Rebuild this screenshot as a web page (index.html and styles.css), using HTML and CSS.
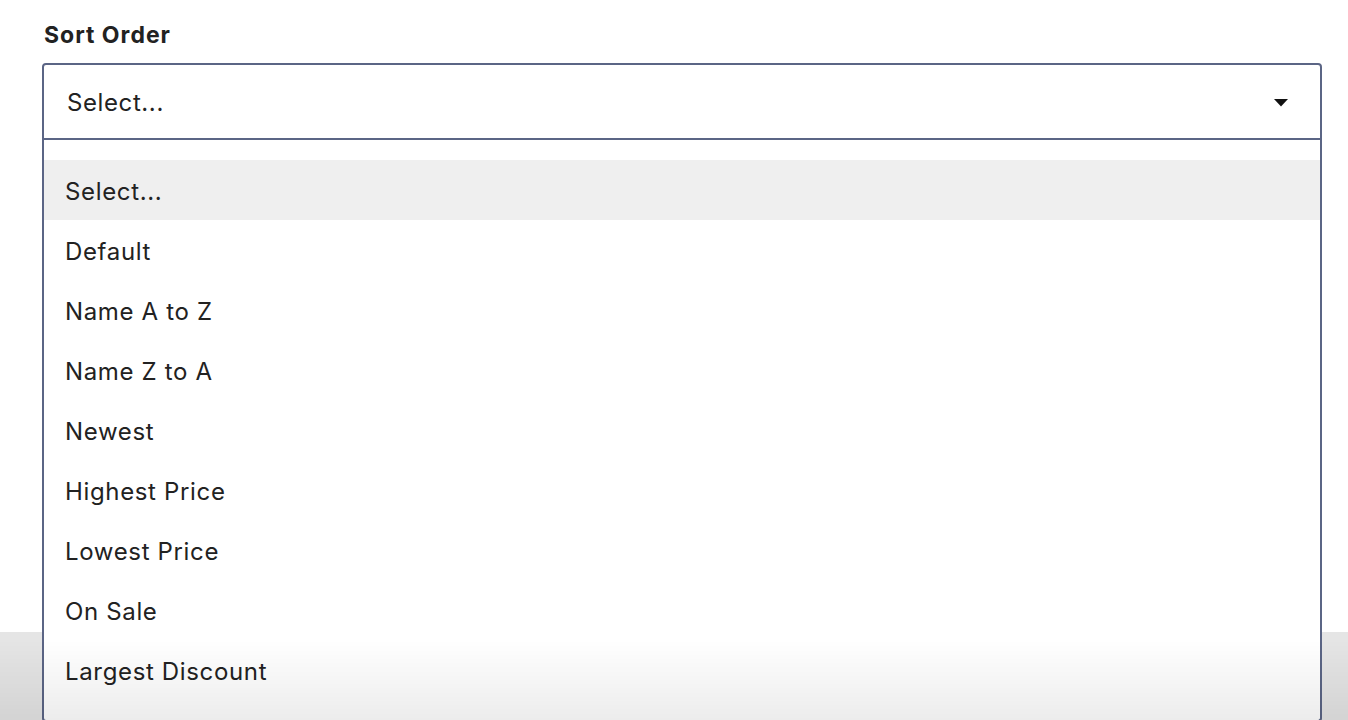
FILE: index.html
```html
<!DOCTYPE html>
<html lang="en">
<head>
<meta charset="utf-8">
<title>Sort Order</title>
<link rel="stylesheet" href="styles.css">
</head>
<body>
<main class="content">
  <div class="field">
    <label class="field-label">Sort Order</label>
    <div class="select-wrap">
      <div class="select-control">
        <span class="select-value">Select...</span>
        <svg class="select-arrow" width="14" height="8" viewBox="0 0 14 8"><path d="M0 0 H14 L7 7.5 Z" fill="#111"/></svg>
      </div>
      <ul class="select-menu">
        <li class="option option-active">Select...</li>
        <li class="option">Default</li>
        <li class="option">Name A to Z</li>
        <li class="option">Name Z to A</li>
        <li class="option">Newest</li>
        <li class="option">Highest Price</li>
        <li class="option">Lowest Price</li>
        <li class="option">On Sale</li>
        <li class="option">Largest Discount</li>
      </ul>
    </div>
  </div>
</main>
<footer class="footer"></footer>
<div class="fade"></div>
</body>
</html>
```

FILE: styles.css
```css
* { box-sizing: border-box; }
html, body { margin: 0; padding: 0; }
body {
  font-family: Inter, "Noto Sans", sans-serif;
  color: #222;
  background: #fff;
  height: 720px;
  overflow: hidden;
}
.content {
  height: 632px;
  padding: 20px 27px 0 42px;
}
.field-label {
  display: block;
  font-size: 23px;
  font-weight: 700;
  color: #222;
  line-height: 30px;
  padding-left: 2px;
  margin-bottom: 13px;
  letter-spacing: 1px;
}
.select-wrap {
  position: relative;
  width: 1280px;
}
.select-control {
  height: 77px;
  border: 2px solid #5b6585;
  border-radius: 4px 4px 0 0;
  display: flex;
  align-items: center;
  justify-content: space-between;
  padding: 2px 32px 0 23px;
  background: #fff;
}
.select-value {
  font-size: 24px;
  color: #222;
  letter-spacing: 0.6px;
}
.select-arrow { display: block; margin-top: 1px; }
.select-menu {
  position: absolute;
  left: 0;
  right: 0;
  top: 77px;
  margin: 0;
  padding: 20px 0 20px;
  list-style: none;
  background: #fff;
  border-left: 2px solid #5b6585;
  border-right: 2px solid #5b6585;
  border-bottom: 2px solid #5b6585;
  border-radius: 0 0 4px 4px;
  z-index: 2;
}
.option {
  height: 60px;
  display: flex;
  align-items: center;
  padding: 3px 0 0 21px;
  font-size: 24px;
  color: #222;
  letter-spacing: 0.65px;
}
.option-active { background: #efefef; }
.footer {
  height: 88px;
  background: #e5e5e5;
}
.fade {
  position: fixed;
  left: 0;
  right: 0;
  bottom: 0;
  height: 80px;
  background: linear-gradient(to bottom, rgba(0,0,0,0), rgba(0,0,0,0.075));
  z-index: 5;
  pointer-events: none;
}
```
